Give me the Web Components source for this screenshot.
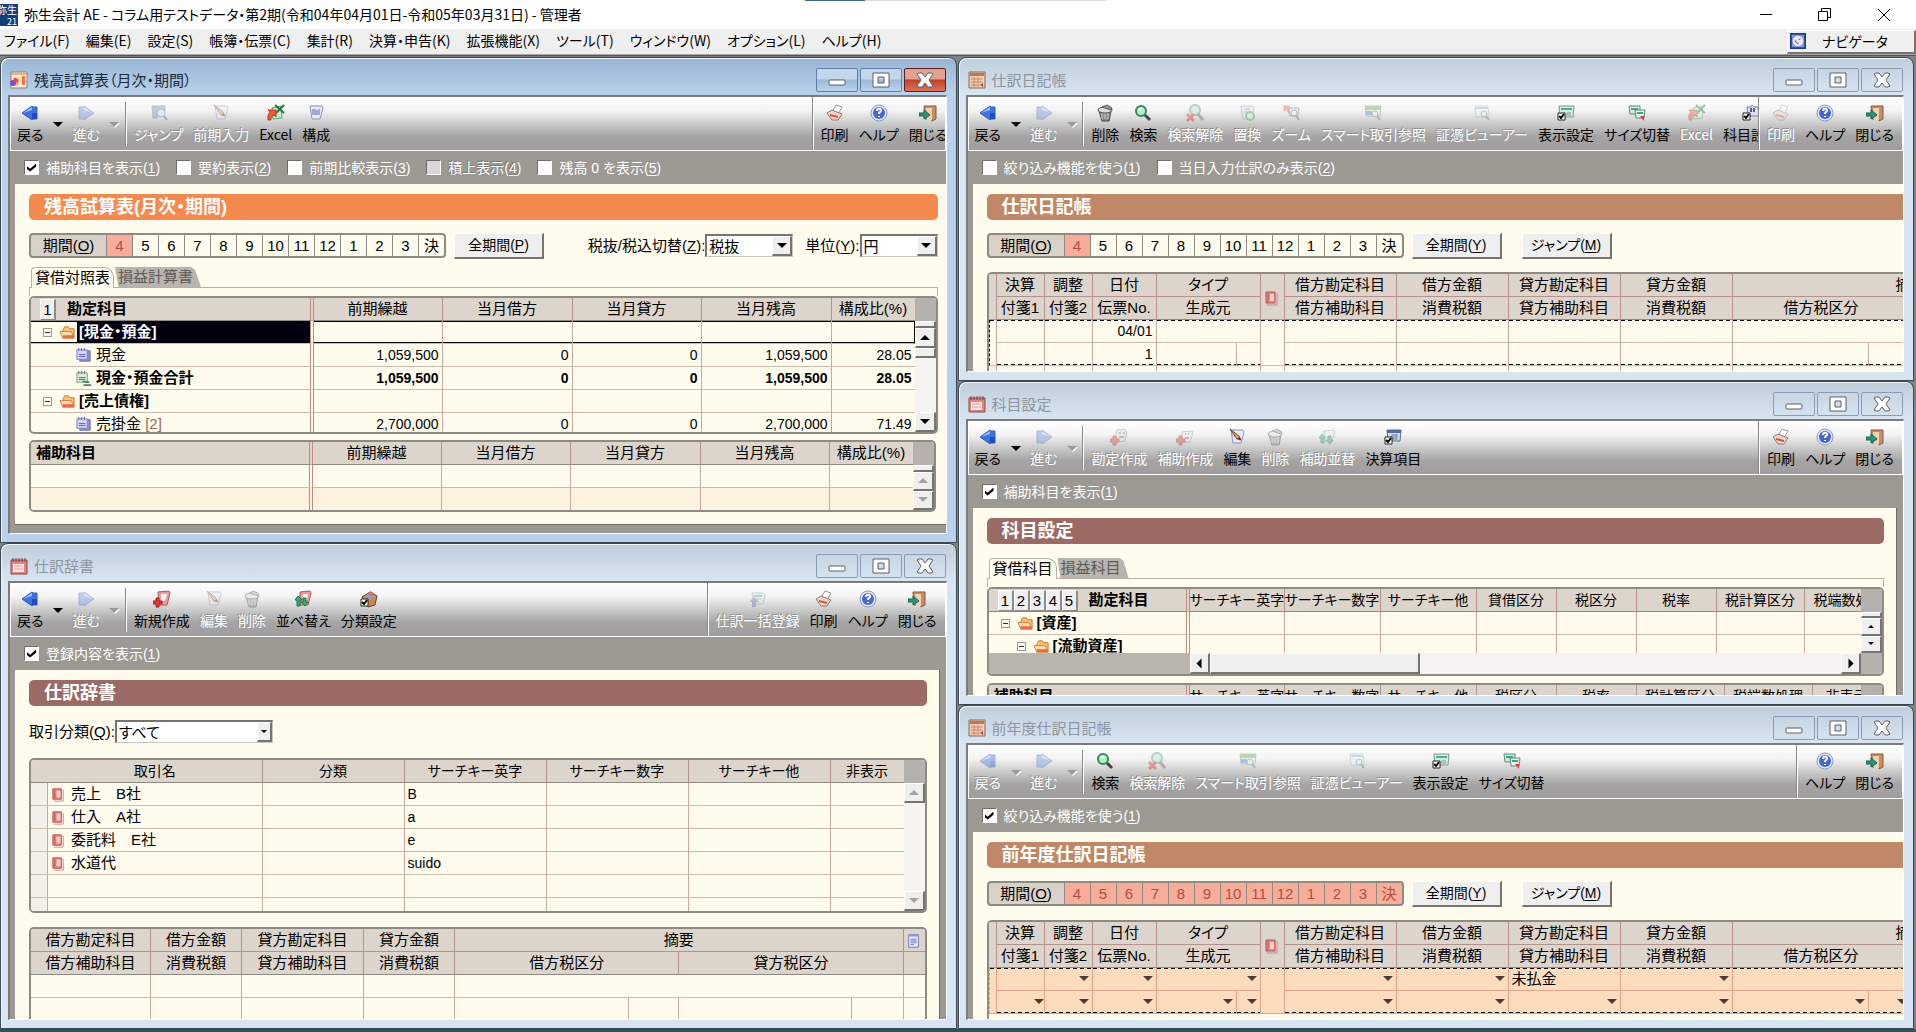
<!DOCTYPE html>
<html lang="ja">
<head>
<meta charset="utf-8">
<title>弥生会計 AE</title>
<style>
    html, body {
        margin: 0;
        height: 100%;
        overflow: hidden;
    }
    body {
        font: 15px/22px "Liberation Sans", "Noto Sans CJK JP", sans-serif;
        font-feature-settings: "palt";
        color: #000;
        background: #2c5357;
    }
</style>
</head>
<body>
<accounting-app></accounting-app>

<script>
const BASE = `
    :host, * { box-sizing: border-box; }
    button, input, select { font: inherit; font-feature-settings: inherit; color: inherit; margin: 0; padding: 0; border: 0; border-radius: 0; background: none; }
    u { text-underline-offset: 2px; }
`;

// "期間(_O)" -> underlined access key
const accel = text => text.replace(/_(.)/g, '<u>$1</u>');

const NOTE = '<path d="M3 3h11l2 2-2 9H5z" fill="#d5e9df" stroke="#7c9c92"/><path d="M5 5h8v2H5z" fill="#4fae8f"/>';
const LENS = '<circle cx="11" cy="10" r="3" fill="#dff0f4" stroke="#6d8d9d"/><path d="M13 12l3 4" stroke="#777" stroke-width="2"/>';
const CARD = '<path d="M3 2h12l1 2-3 11H5z" fill="#e8e9f6" stroke="#8d93b8"/>';
const PLUS = '<path d="M3 8h3v3h3v3H6v3H3v-3H0v-3h3z" fill="#e23a35" stroke="#a22"/>';
const CHECK = '<path d="M1 9h7v7H1z" fill="#fff" stroke="#222"/><path d="M2 12l2 2 3-4" stroke="#000" stroke-width="2" fill="none"/>';
const PENCIL = '<path d="M2 1l9 7 2 4-4-1z" fill="#e7a04c" stroke="#7a4a2a"/><path d="M11 9l2 3-3-1z" fill="#333"/>';
const XCEL = '<path d="M5 4l9-2 1 12-9 1z" fill="#c8ead0" stroke="#55a070"/><path d="M8 1l9 8M17 1l-8 8" stroke="#1c7a3d" stroke-width="2"/><path d="M1 16v-5l2-3-2-2h8v7l-2-2-3 2v3z" fill="#ee5a33" stroke="#b93a1d"/>';

const ICONS = {
    back: '<path d="M1 9l10-7 1 1h4v12h-4l-1 1z" fill="#3d73e0" stroke="#3560b5"/><path d="M2 9l9-6v3z" fill="#9dbdf7"/><path d="M11 9h5v6h-5z" fill="#1f4cc0"/>',
    forward: '<path d="M17 9L7 2v1H2v12h5v1z" fill="#6d92e4" stroke="#4b69b8"/><path d="M16 9L7 3v3z" fill="#b5cbf8"/>',
    jump: '<path d="M2 2h5v12H3zM8 2h7v5H8z" fill="#6c94bd" stroke="#5a7899"/><circle cx="11" cy="9" r="4" fill="#cfe5f1" stroke="#4778a8"/><path d="M14 12l3 4" stroke="#567" stroke-width="2"/>',
    edit: CARD + PENCIL,
    excel: XCEL,
    compose: CARD + '<path d="M6 5v6M8 5v6M10 6v5M12 5v6" stroke="#6268b4"/>',
    print: '<path d="M6 8l4-7 6 2-4 7z" fill="#fff" stroke="#999"/><path d="M1 9l5-3 10 4-4 6H6z" fill="#ecd6c9" stroke="#95766c"/><path d="M4 10l8 2v2l-8-2z" fill="#e04c3a"/>',
    help: '<circle cx="9" cy="9" r="8" fill="#dfe7f7" stroke="#8a9cc4"/><circle cx="9" cy="9" r="6" fill="#4868cf"/><path d="M7 7c0-3 5-3 4 0-1 1-2 1-2 3M9 12v1" stroke="#fff" stroke-width="2" fill="none"/>',
    door: '<path d="M5 2h12v13l-4 2v-2H6z" fill="#c88d66" stroke="#8c5b3d"/><path d="M7 4h6v12H8z" fill="#efd1ae"/><path d="M0 9h5V6l6 5-6 4v-3H0z" fill="#27967e" stroke="#176553"/>',
    trash: '<path d="M3 7h12l-2 10H6z" fill="#8d8d8d" stroke="#444"/><path d="M6 9v6M9 9v6M12 9v6" stroke="#ccc"/><ellipse cx="9" cy="6" rx="7" ry="3" fill="#ddd" stroke="#555"/><path d="M6 3l5-2 5 3-1 2z" fill="#999" stroke="#555"/>',
    search: '<circle cx="7" cy="7" r="5" fill="#b9eccb" stroke="#2f8a59" stroke-width="2"/><path d="M5 6l3-2" stroke="#fff" stroke-width="2"/><path d="M11 11l5 5" stroke="#444" stroke-width="3"/>',
    unsearch: '<circle cx="9" cy="6" r="5" fill="#b9eccb" stroke="#5a9a79" stroke-width="2"/><path d="M12 10l5 6" stroke="#666" stroke-width="3"/><path d="M1 10l7 7M8 10l-7 7" stroke="#e22" stroke-width="3"/>',
    replace: CARD + '<circle cx="12" cy="12" r="4" fill="#c9efd2" stroke="#35a565" stroke-width="2"/><path d="M6 5h6M6 8h4" stroke="#6b77b5"/>',
    zoom: '<path d="M1 1l7 1-1 3 3 3-3 2-3-4-2 2z" fill="#e25b3a"/><path d="M7 4h10l-1 8H8z" fill="#dbe7ee" stroke="#667"/><circle cx="12" cy="9" r="3" fill="#eef7fb" stroke="#667"/><path d="M14 11l3 5" stroke="#666" stroke-width="2"/>',
    smart: '<path d="M1 2h16l-1 10H2z" fill="#e6efe0" stroke="#7c9c72"/><path d="M1 2h16v4H1z" fill="#64ab4a"/><path d="M2 7h6v4H2z" fill="#4b89cf"/>' + LENS,
    voucher: '<path d="M2 2h13l1 11H3z" fill="#eef5f8" stroke="#9ab2bb"/><path d="M3 4h12" stroke="#7fb0c0" stroke-width="2"/>' + LENS,
    viewset: '<path d="M2 2h15l-1 11H3z" fill="#d5e9df" stroke="#7c9c92"/><path d="M4 4h11v2H4z" fill="#4fae8f"/><path d="M9 9h5M9 11h5" stroke="#7c9c92"/>' + CHECK,
    resize: '<path d="M1 2h11v8H2z" fill="#d5e9df" stroke="#55907c"/><path d="M3 4h7v2H3z" fill="#3fa583"/><path d="M7 6h10l-1 8H8z" fill="#e3f1ea" stroke="#55907c"/><path d="M9 8h6v2H9z" fill="#3fa583"/><path d="M12 12h4v5z" fill="#e2353a"/>',
    account: '<path d="M5 3h4l1-2 2 2h4l1 9H6z" fill="#dcdff5" stroke="#777ba5"/><path d="M9 4v4M12 4v4" stroke="#555a99" stroke-width="2"/>' + CHECK,
    acctnew: '<path d="M6 3l3-2 2 1 3-1 3 3-2 9-8 1z" fill="#e0dfe3" stroke="#88888f"/><path d="M9 5h2M13 5h2M9 9h5" stroke="#777" stroke-width="2"/>' + PLUS,
    subnew: '<path d="M6 4l10-1 1 2-3 9H6z" fill="#eeece9" stroke="#99938d"/><path d="M9 6h1M12 6h1M9 10h4" stroke="#777" stroke-width="2"/>' + PLUS,
    subsort: '<path d="M6 3l10-1 1 2-3 9H6z" fill="#e0eee6" stroke="#8aa398"/><path d="M4 6l4 4H6v5H3v-5H1zM12 16l-4-4h2V8h3v4h2z" fill="#30a871" stroke="#1c7f52"/>',
    closing: '<path d="M3 2h14l-1 11H4z" fill="#d3dcea" stroke="#5f718f"/><path d="M3 2h14v3H3z" fill="#506ca8"/><path d="M7 7h7M7 9h7M7 11h7M9 6v6M12 6v6" stroke="#7b8cae"/>' + CHECK,
    create: '<path d="M5 2l11-1 1 2-3 12H6z" fill="#ef9aa0" stroke="#b3565c"/><path d="M8 4h6l-2 7H8z" fill="#fff2f0"/>' + PLUS,
    sort: '<path d="M6 2l10-1 1 2-3 12H6z" fill="#ef9aa0" stroke="#b3565c"/><path d="M9 4h5l-1 6H9z" fill="#fff2f0"/><path d="M4 6l4 4H6v6H3v-6H1zM11 16l-4-4h2V8h3v4h2z" fill="#2fb573" stroke="#14794a"/>',
    category: '<path d="M2 7l8-5 7 4-2 9-7 2z" fill="#c98a58" stroke="#6e3f20"/><path d="M5 6l5-4 5 4-5 3z" fill="#8f9ae0"/><path d="M10 1l4 2-1 3-4-1z" fill="#e46a5a"/>' + CHECK,
    bulk: NOTE + '<path d="M6 9h6" stroke="#7c9c92"/><path d="M5 7l5 5H7v5H3v-5H0z" fill="#7a63d0"/>',
    folder: '<path d="M4 7l2-4h4l1 2h5v9H4z" fill="#f9c177" stroke="#c9762c"/><path d="M1 8h12l3 7H4z" fill="#fbdcae" stroke="#d0803a"/><path d="M4 12h11l1 3H4z" fill="#e86a3e"/>',
    item: '<path d="M5 4h11v11H5z" fill="#8e90da" stroke="#6467b0"/><path d="M2 3h11v10H2z" fill="#d3d6f8" stroke="#7b80c8"/><path d="M4 1v3M7 1v3M10 1v3M4 8h7M4 10h7" stroke="#5b60b8"/>',
    total: '<path d="M2 3h11v10H2z" fill="#dbeae0" stroke="#7c9c86"/><path d="M4 1v3M7 1v3M10 1v3M4 8h7M4 10h7" stroke="#4c7a5b"/><path d="M8 11l7 1v2l-7-1zM9 15h8v2H9z" fill="#4f8465"/>',
    book: '<path d="M3 3h9v11H3z" fill="#e88b86" stroke="#b45450"/><path d="M5 4v9" stroke="#b45450"/><path d="M7 5h4v7H7z" fill="#f9cfcb"/><path d="M14 4v12H4" stroke="#c98d88" fill="none"/>',
    memo: '<path d="M3 2h11v14H3z" fill="#e8ebfb" stroke="#6a70b5"/><path d="M4 1h9v3H4z" fill="#8c93d6"/><path d="M5 7h7M5 9h7M5 11h7M5 13h4" stroke="#6a70b5"/>',
    chart: '<path d="M1 1h16v16H1z" fill="#fbeee0" stroke="#8b7b78"/><path d="M2 2h14v2H2z" fill="#f0b27a"/><path d="M12 5h3v9h-3z" fill="#ee7b3d"/><path d="M3 7c6-2 8 2 5 7l-5 1z" fill="#f4a070"/><circle cx="3" cy="12" r="3" fill="#7a4fd0"/><path d="M4 11V7a4 4 0 0 1 4 4z" fill="#e8483f"/>',
    ledger: '<path d="M1 1h16v16H1z" fill="#f1c9ae" stroke="#8b6a5c"/><path d="M2 2h14v3H2z" fill="#b07a66"/><path d="M3 8h11M3 11h11M3 14h8M6 6v10M10 6v10" stroke="#c98b70"/><path d="M12 14l3-2v4z" fill="#9c4a3a"/>',
    calendar: '<path d="M1 3h16v14H1z" fill="#dd8688" stroke="#8c4a4e"/><path d="M3 1v4M6 1v4M9 1v4M12 1v4M15 1v4" stroke="#7a4448"/><path d="M3 7h11v8H3z" fill="#fde8e6"/><path d="M4 9h9M4 12h9" stroke="#e0a09e"/>',
    navi: '<path d="M1 1h16v16H1z" fill="#8496da" stroke="#243a86" stroke-width="2"/><circle cx="9" cy="9" r="6" fill="#e6ebfb"/><path d="M5 9l7-3-3 7z" fill="#8b4a9c"/><circle cx="9" cy="9" r="2" fill="#fff"/>'
};

class WinIcon extends HTMLElement {
    constructor() {
        super();
        this.attachShadow({mode: 'open'});
    }

    connectedCallback() {
        this.shadowRoot.innerHTML = `
            <style>
                :host { display: inline-block; flex: none; width: var(--icon, 18px); height: var(--icon, 18px); }
                svg { display: block; width: 100%; height: 100%; }
            </style>
            <svg viewBox="0 0 18 18" fill="none" aria-hidden="true">${ICONS[this.getAttribute('name')] || ''}</svg>`;
    }
}
customElements.define('win-icon', WinIcon);

class ToolButton extends HTMLElement {
    constructor() {
        super();
        this.attachShadow({mode: 'open'});
    }

    connectedCallback() {
        const off = this.hasAttribute('disabled');
        const menu = this.hasAttribute('menu');
        this.shadowRoot.innerHTML = `
            <style>
                ${BASE}
                :host { display: flex; flex: none; }
                button { display: flex; flex-direction: column; align-items: center; padding: 7px 5px 0; white-space: nowrap; }
                button.arrow { padding: 25px 0 0; width: 19px; }
                span { line-height: 24px; }
                .arrow i { border: 5px solid transparent; border-top-color: #000; border-bottom: 0; }
                button:disabled win-icon { opacity: .4; }
                button:disabled span { color: #fff; text-shadow: -1px -1px 0 #939191; }
                button:disabled i { border-top-color: #999; filter: drop-shadow(1px 1px 0 #fff); }
            </style>
            <button ${off ? 'disabled' : ''}><win-icon name="${this.getAttribute('icon')}"></win-icon><span>${this.getAttribute('label')}</span></button>
            ${menu ? `<button class="arrow" aria-label="履歴" ${off ? 'disabled' : ''}><i></i></button>` : ''}`;
    }
}
customElements.define('tool-button', ToolButton);

class ToolBar extends HTMLElement {
    constructor() {
        super();
        this.attachShadow({mode: 'open'}).innerHTML = `
            <style>
                ${BASE}
                :host {
                    display: flex;
                    flex: none;
                    height: 54px;
                    border: 1px solid #fff;
                    border-top: 0;
                    background: linear-gradient(#fff 0%, #f4f4f4 25%, #a5a3a3 75%, #9f9d9d 100%);
                    font-family: "Noto Sans CJK JP", sans-serif;
                    font-size: 14px;
                    overflow: hidden;
                }
                .history { display: flex; flex: none; margin: 5px 0 4px; padding: 0 1px; border-right: 1px solid #888; box-shadow: 1px 0 #fff; }
                .history slot { display: flex; margin-top: -5px; }
                .main { display: flex; flex: 1; min-width: 0; overflow: hidden; padding-left: 3px; }
                .side { display: flex; flex: none; border-left: 1px solid #888; box-shadow: inset 1px 0 #fff; padding: 0 3px; }
                :host([cut]) .side { margin-right: -11px; }
            </style>
            <div class="history"><slot name="history"></slot></div>
            <div class="main"><slot></slot></div>
            <div class="side"><slot name="side"></slot></div>`;
    }
}
customElements.define('tool-bar', ToolBar);

class CheckOption extends HTMLElement {
    constructor() {
        super();
        this.attachShadow({mode: 'open'});
    }

    connectedCallback() {
        const has = name => this.hasAttribute(name) ? name : '';
        this.shadowRoot.innerHTML = `
            <style>
                ${BASE}
                :host { display: block; color: #fff; font-size: 14px; }
                label { display: flex; align-items: center; gap: 7px; white-space: nowrap; }
                input { appearance: none; width: 15px; height: 15px; background: #fff; border: 1px solid #6f6c68; border-right-color: #fff; border-bottom-color: #fff; display: grid; place-content: center; }
                input:checked::before { content: ""; width: 9px; height: 8px; background: #000; clip-path: polygon(0 35%, 35% 65%, 100% 0, 100% 40%, 35% 100%, 0 70%); }
                input:disabled { background: #d9d7d4; }
                input:disabled + span { text-shadow: -1px -1px 0 #7d7a76; }
            </style>
            <label><input type="checkbox" ${has('checked')} ${has('disabled')}><span>${accel(this.getAttribute('label'))}</span></label>`;
    }
}
customElements.define('check-option', CheckOption);

class PushButton extends HTMLElement {
    constructor() {
        super();
        this.attachShadow({mode: 'open'});
    }

    connectedCallback() {
        this.shadowRoot.innerHTML = `
            <style>
                ${BASE}
                :host { display: block; flex: none; }
                button { width: 90px; height: 26px; background: #efefef; border: 1px solid #fff; border-right: 2px solid #77746f; border-bottom: 2px solid #77746f; font-size: 14px; line-height: 22px; white-space: nowrap; }
            </style>
            <button>${accel(this.getAttribute('label'))}</button>`;
    }
}
customElements.define('push-button', PushButton);

class SelectField extends HTMLElement {
    constructor() {
        super();
        this.attachShadow({mode: 'open'});
    }

    connectedCallback() {
        this.shadowRoot.innerHTML = `
            <style>
                ${BASE}
                :host { display: flex; align-items: center; flex: none; }
                .box { position: relative; width: var(--field, 88px); height: 23px; background: #fff; border: 2px solid #77746f; border-right: 1px solid #c9c6c0; border-bottom: 1px solid #c9c6c0; }
                select { appearance: none; width: 100%; height: 100%; padding-left: 2px; line-height: 20px; }
                i { position: absolute; right: 0; top: 0; bottom: 0; width: var(--arrow, 20px); background: #efefef; border: 1px solid #fff; border-right: 2px solid #77746f; border-bottom: 2px solid #77746f; display: grid; place-content: center; pointer-events: none; }
                i::before { content: ""; border: var(--tip, 5px) solid transparent; border-top-color: #000; border-bottom: 0; }
                label { white-space: nowrap; }
            </style>
            <label for="s">${accel(this.getAttribute('label'))}</label>
            <div class="box"><select id="s"><option>${this.getAttribute('value')}</option></select><i></i></div>`;
    }
}
customElements.define('select-field', SelectField);

class PeriodBar extends HTMLElement {
    constructor() {
        super();
        this.attachShadow({mode: 'open'});
    }

    connectedCallback() {
        const all = this.hasAttribute('all');
        const months = ['4', '5', '6', '7', '8', '9', '10', '11', '12', '1', '2', '3', '決'];
        this.shadowRoot.innerHTML = `
            <style>
                ${BASE}
                :host { display: flex; flex: none; height: 25px; border: 2px solid #8e8b84; border-radius: 4px; background: #8e8b84; gap: 1px; overflow: hidden; line-height: 21px; }
                span { width: 75px; background: #d9d1c8; text-align: center; }
                button { width: 25px; background: #fffcee; }
                .on { background: #f8ad9b; color: #b0503c; }
            </style>
            <span>${accel('期間(_O)')}</span>
            ${months.map((m, i) => `<button class="${all || i === 0 ? 'on' : ''}">${m}</button>`).join('')}`;
    }
}
customElements.define('period-bar', PeriodBar);

class TabStrip extends HTMLElement {
    constructor() {
        super();
        this.attachShadow({mode: 'open'});
    }

    connectedCallback() {
        const [first, second] = this.getAttribute('tabs').split(',');
        this.shadowRoot.innerHTML = `
            <style>
                ${BASE}
                :host { display: block; flex: none; }
                .tabs { display: flex; align-items: flex-end; height: 21px; padding-left: 2px; gap: 1px; border-bottom: 1px solid #b9b1a6; }
                button { height: 20px; line-height: 20px; padding: 0 3px; white-space: nowrap; }
                button:first-child { height: 21px; margin-bottom: -1px; border: 1px solid #b9b1a6; border-bottom: 0; border-radius: 4px 10px 0 0; background: #fffcee; }
                button + button { background: #b8b4ae; color: #5d5a56; padding-right: 8px; clip-path: polygon(0 0, 88% 0, 93% 15%, 100% 100%, 4% 100%); }
                .edge { height: 8px; border: solid #b9b1a6; border-width: 0 1px; }
            </style>
            <div class="tabs" role="tablist"><button role="tab" aria-selected="true">${first}</button><button role="tab">${second}</button></div>
            <div class="edge"></div>`;
    }
}
customElements.define('tab-strip', TabStrip);

class ScrollBar extends HTMLElement {
    constructor() {
        super();
        this.attachShadow({mode: 'open'});
    }

    connectedCallback() {
        const off = this.hasAttribute('disabled') ? 'disabled' : '';
        this.shadowRoot.innerHTML = `
            <style>
                ${BASE}
                :host { display: flex; flex-direction: column; flex: none; width: 21px; background: #f5f4f3; }
                :host([horizontal]) { flex-direction: row; width: auto; height: 21px; }
                .corner { flex: none; height: 23px; background: #b5b1ac; }
                .split { height: 7px; }
                .split, button, .thumb { flex: 0 1 auto; background: #efefef; border: 1px solid #fff; border-right: 2px solid #77746f; border-bottom: 2px solid #77746f; }
                button { flex: 0 1 20px; min-height: 15px; width: 21px; display: grid; place-content: center; }
                .track { flex: 1 1 0; }
                .thumb { height: 10px; }
                i { border: 5px solid transparent; border-bottom-color: #000; border-top: 0; }
                .end i { transform: rotate(180deg); }
                button:disabled i { border-bottom-color: #a5a29e; }
                :host([short]) i { border-width: 0 3px 3px; }
                :host([unsplit]) .split { display: none; }
                :host([horizontal]) .corner, :host([horizontal]) .split { display: none; }
                :host([horizontal]) .thumb { height: auto; width: 210px; }
                :host([horizontal]) .start i { transform: rotate(-90deg); }
                :host([horizontal]) .end i { transform: rotate(90deg); }
            </style>
            <div class="corner"></div>
            <div class="split"></div>
            <button class="start" aria-label="前へ" ${off}><i></i></button>
            ${off || this.hasAttribute('short') ? '' : '<div class="thumb"></div>'}
            <div class="track"></div>
            <button class="end" aria-label="次へ" ${off}><i></i></button>`;
    }
}
customElements.define('scroll-bar', ScrollBar);

const th = (t, o = {}) => ({t, ...o});
const mark = '<win-icon name="book"></win-icon>';
const group = (t, level = 0) => `<div class="tree g l${level}"><span class="pre"><b class="minus"></b><win-icon name="folder"></win-icon></span><span class="txt">[${t}]</span></div>`;
const leaf = (t, icon = 'item') => `<div class="tree leaf"><win-icon name="${icon}"></win-icon><span>${t}</span></div>`;
const levels = n => Array.from({length: n}, (_, i) => `<button class="lv">${i + 1}</button>`).join('');
const sums = ['前期繰越', '当月借方', '当月貸方', '当月残高', '構成比(%)'];
const journalHead = [
    [th('', {rs: 2}), th('決算'), th('調整'), th('日付'), th('タイプ', {cs: 2}), th(mark, {rs: 2}), th('借方勘定科目'), th('借方金額'), th('貸方勘定科目'), th('貸方金額'), th('摘要', {cs: 4})],
    [th('付箋1'), th('付箋2'), th('伝票No.'), th('生成元', {cs: 2}), th('借方補助科目'), th('消費税額'), th('貸方補助科目'), th('消費税額'), th('借方税区分', {cs: 2}), th('貸方税区分', {cs: 2})]
];
const journalCols = [8, 48, 48, 64, 80, 24, 24, 112, 112, 112, 112, 136, 42, 136, 42];
const dd = '<i class="dd"></i>';

const GRIDS = {
    balance: {
        cols: [null, 129, 130, 129, 130, 83],
        double: true,
        head: [[th(levels(1) + '勘定科目', {c: 'name'}), ...sums.map(s => th(s))]],
        rows: [
            {c: 'sel', d: [group('現金・預金'), '', '', '', '', '']},
            {d: [leaf('現金'), '1,059,500', '0', '0', '1,059,500', '28.05']},
            {c: 'bold', d: [leaf('現金・預金合計', 'total'), '1,059,500', '0', '0', '1,059,500', '28.05']},
            {d: [group('売上債権'), '', '', '', '', '']},
            {d: [leaf('売掛金 <em>[2]</em>'), '2,700,000', '0', '0', '2,700,000', '71.49']}
        ],
        scroll: '<scroll-bar></scroll-bar>'
    },
    balanceSub: {
        cols: [null, 129, 129, 130, 129, 83],
        double: true,
        head: [[th('補助科目', {c: 'name flush'}), ...sums.map(s => th(s))]],
        rows: [{d: ['', '', '', '', '', '']}, {c: 'alt', d: ['', '', '', '', '', '']}],
        scroll: '<scroll-bar disabled></scroll-bar>'
    },
    journal: {
        cols: journalCols,
        head: journalHead,
        rows: [
            {c: 'top', d: [th('', {rs: 2, c: 'grip'}), '', '', '04/01', th('', {cs: 2}), th('', {rs: 2}), '', '', '', '', th('', {cs: 4})]},
            {c: 'bottom', d: ['', '', '1', '', '', '', '', '', '', '', '', '', '']},
            {d: [th('', {c: 'grip'}), '', '', '', th('', {cs: 2}), '', '', '', '', '', th('', {cs: 4})]}
        ]
    },
    prevJournal: {
        cols: journalCols,
        head: journalHead,
        rows: [
            {c: 'top', d: [th('', {rs: 2, c: 'grip'}), '', dd, dd, th(dd, {cs: 2}), th('', {rs: 2}), dd, dd, th('未払金', {c: 'left'}), dd, th('', {cs: 4})]},
            {c: 'bottom', d: [dd, dd, dd, dd, dd, dd, dd, dd, dd, dd, dd, dd, dd]}
        ]
    },
    accounts: {
        cols: [201, 95, 96, 96, 80, 80, 80, 88, 88],
        double: true,
        head: [[th(levels(5) + '勘定科目', {c: 'name'}), ...['サーチキー英字', 'サーチキー数字', 'サーチキー他', '貸借区分', '税区分', '税率', '税計算区分', '税端数処理'].map(s => th(s, {c: 'small'}))]],
        rows: [
            {d: [group('資産'), '', '', '', '', '', '', '', '']},
            {d: [group('流動資産', 1), '', '', '', '', '', '', '', '']}
        ],
        scroll: '<scroll-bar short></scroll-bar>',
        footer: '<div class="foot"><div class="pad"></div><scroll-bar horizontal></scroll-bar><div class="cap"></div></div>'
    },
    accountsSub: {
        cols: [201, 95, 96, 96, 80, 80, 88, 88, 68],
        double: true,
        head: [[th('補助科目', {c: 'name flush'}), ...['サーチキー英字', 'サーチキー数字', 'サーチキー他', '税区分', '税率', '税計算区分', '税端数処理', '非表示'].map(s => th(s, {c: 'small'}))]],
        rows: [],
        scroll: '<scroll-bar short></scroll-bar>'
    },
    dictionary: {
        cols: [17, null, 142, 142, 142, 142, 73],
        head: [[th('', {c: 'open'}), ...['取引名', '分類', 'サーチキー英字', 'サーチキー数字', 'サーチキー他', '非表示'].map(s => th(s, {c: 'small'}))]],
        rows: [['売上　B社', 'B'], ['仕入　A社', 'a'], ['委託料　E社', 'e'], ['水道代', 'suido'], null, null].map(r => ({
            c: 'text',
            d: [th('', {c: 'grip'}), r ? `<div class="tree entry">${mark}<span>${r[0]}</span></div>` : '', '', r ? r[1] : '', '', '', '']
        })),
        scroll: '<scroll-bar disabled unsplit></scroll-bar>'
    },
    dictionaryDetail: {
        cols: [120, 91, 122, 91, null, 50, 173, 51, 21],
        head: [
            [th('借方勘定科目'), th('借方金額'), th('貸方勘定科目'), th('貸方金額'), th('摘要', {cs: 4}), th('<win-icon name="memo"></win-icon>', {c: 'tight'})],
            [th('借方補助科目'), th('消費税額'), th('貸方補助科目'), th('消費税額'), th('借方税区分', {cs: 2}), th('貸方税区分', {cs: 2}), th('')]
        ],
        rows: [
            {d: ['', '', '', '', th('', {cs: 4}), '']},
            {d: ['', '', '', '', '', '', '', '', '']}
        ]
    }
};

class DataGrid extends HTMLElement {
    constructor() {
        super();
        this.attachShadow({mode: 'open'});
    }

    connectedCallback() {
        const g = GRIDS[this.getAttribute('model')];
        const flexible = g.cols.includes(null);
        const width = flexible ? '100%' : g.cols.reduce((a, b) => a + b, 0) + 'px';
        const head = g.head.map(r => `<tr>${r.map(c => this.cell('th', c)).join('')}</tr>`).join('');
        const rows = g.rows.map(r => `<tr class="${r.c || ''}">${r.d.map(c => this.cell('td', c)).join('')}</tr>`).join('');
        this.shadowRoot.innerHTML = `
            <style>
                ${BASE}
                ${this.styles()}
                table { width: ${width}; }
                ${g.double ? 'th:first-child, td:first-child { border-right: 4px double #c28a80; }' : ''}
            </style>
            <div class="main">
                <div class="view">
                    <table><colgroup>${g.cols.map(w => `<col${w ? ` style="width:${w}px"` : ''}>`).join('')}</colgroup><thead>${head}</thead><tbody>${rows}</tbody></table>
                </div>
                ${g.scroll || ''}
            </div>
            ${g.footer || ''}`;
    }

    cell(tag, c) {
        const o = typeof c === 'string' ? {t: c} : c;
        return `<${tag}${o.c ? ` class="${o.c}"` : ''}${o.cs ? ` colspan="${o.cs}"` : ''}${o.rs ? ` rowspan="${o.rs}"` : ''}>${o.t}</${tag}>`;
    }

    styles() {
        return `
            :host { display: flex; flex-direction: column; min-height: 0; border: 2px solid #8e8b84; border-radius: 5px; background: #fffcee; overflow: hidden; }
            :host([open]) { border-right: 0; border-bottom: 0; border-radius: 5px 0 0 0; }
            .main { display: flex; flex: 1; min-height: 0; }
            .view { flex: 1; min-width: 0; overflow: hidden; }
            table { table-layout: fixed; border-collapse: separate; border-spacing: 0; }
            th, td { height: 23px; padding: 0; line-height: 22px; border-right: 1px solid #c9a79e; border-bottom: 1px solid #cdbcae; white-space: nowrap; overflow: hidden; }
            th { font-weight: normal; background: #ddd5cc; border-color: #b3938b; text-align: center; }
            thead tr:last-child th { border-bottom-color: #8e8b84; }
            td { text-align: right; padding-right: 3px; font-size: 14px; }
            td:first-child { padding: 0; }
            th:last-child, td:last-child { border-right: 0; }
            th win-icon { vertical-align: middle; }
            th.small { font-size: 14px; }
            th.open { border-right: 0; }
            .tight win-icon { --icon: 16px; }
            th.name { text-align: left; font-weight: bold; padding-left: 9px; }
            th.flush { padding-left: 5px; }
            .lv { width: 16px; height: 21px; margin-top: 1px; background: #efefef; border: 1px solid #fff; border-right: 2px solid #8e8b84; border-bottom: 1px solid #8e8b84; font-weight: normal; line-height: 18px; vertical-align: top; }
            .lv:last-of-type { margin-right: 11px; }
            .tree { display: flex; align-items: center; height: 22px; font-size: 15px; text-align: left; --icon: 17px; }
            .g { font-weight: bold; }
            .pre { display: flex; align-items: center; align-self: stretch; gap: 7px; padding: 0 1px 0 12px; }
            .l1 .pre { padding-left: 28px; }
            .minus { width: 9px; height: 9px; border: 1px solid #999; background: linear-gradient(#333, #333) center / 5px 1px no-repeat; }
            .txt { flex: 1; padding-left: 2px; }
            .leaf { padding-left: 44px; gap: 4px; }
            .entry { padding-left: 2px; gap: 4px; }
            em { font-style: normal; color: #a5645a; }
            .bold { font-weight: bold; }
            .alt td { background: #fdf2e0; }
            .sel td { box-shadow: inset 0 1px #000, inset 0 -1px #000; }
            .sel .pre { margin: 1px 0; }
            .sel .txt { background: #000010; color: #fff; }
            .sel td:last-child { border-right: 1px solid #000; }
            .text td { text-align: left; padding-left: 3px; }
            .text td:first-child, .text td:nth-child(2) { padding-left: 0; }
            td.grip { background: #f3efe9; }
            td.left { text-align: left; padding-left: 3px; font-size: 15px; }
            .top td { background: repeating-linear-gradient(90deg, #000 0 4px, transparent 4px 7px) top / 100% 1px no-repeat; }
            .bottom td { background: repeating-linear-gradient(90deg, #000 0 4px, transparent 4px 7px) bottom / 100% 1px no-repeat; }
            td.grip[rowspan] { border-left: 1px dashed #000; }
            :host([tint]) td { background-color: #fddcbd; border-color: #e0a58c; }
            .dd { display: inline-block; border: 5px solid transparent; border-top-color: #4a3a30; border-bottom: 0; margin-bottom: 3px; }
            .foot { display: flex; flex: none; height: 21px; }
            .pad { flex: none; width: 201px; background: #b8b4ae; }
            .foot scroll-bar { flex: 1; }
            .cap { width: 21px; background: #b5b1ac; }
        `;
    }
}
customElements.define('data-grid', DataGrid);

class MdiWindow extends HTMLElement {
    constructor() {
        super();
        this.attachShadow({mode: 'open'});
    }

    connectedCallback() {
        const title = this.getAttribute('heading');
        this.shadowRoot.innerHTML = `
            <style>
                ${BASE}
                :host {
                    --frame: #d7e4f2;
                    --shade: #c0cdda;
                    --caption: #8d959e;
                    display: flex;
                    flex-direction: column;
                    min-height: 0;
                    min-width: 0;
                    padding: 0 9px 8px 7px;
                    border: 1px solid #3c464f;
                    border-radius: 8px 8px 0 0;
                    box-shadow: inset 1px 1px #f2f7fc;
                    background: linear-gradient(var(--shade), var(--frame) 36px, var(--frame));
                }
                :host([active]) { --frame: #b9d1ea; --shade: #99b4d5; --caption: #1b2a3c; }
                header { display: flex; flex: none; align-items: center; height: 37px; padding: 6px 1px 0 2px; color: var(--caption); font-family: "Noto Sans CJK JP", sans-serif; }
                h2 { flex: 1; margin: 0 0 0 6px; font-size: 15px; font-weight: normal; }
                .controls { display: flex; gap: 2px; }
                .controls button { width: 42px; height: 24px; border: 1px solid #8a9bb5; border-radius: 2px; display: grid; place-content: center; }
                :host([active]) .controls button { border-color: #5f7fa8; background: linear-gradient(#c4d6ea 45%, #9db9d9 50%, #b9d2ea); }
                :host([active]) .controls .x { border-color: #5b1f1c; background: linear-gradient(#e2a193 45%, #c1402a 50%, #d8755a); }
                .body { display: flex; flex-direction: column; flex: 1; min-height: 0; border: 2px solid #7d7b79; border-right: 1px solid #fff; border-bottom: 1px solid #fff; background: #9c9892; }
                .options { display: flex; flex: none; align-items: center; gap: 16px; height: 33px; padding-left: 14px; }
                .page { display: flex; flex-direction: column; flex: 1; min-height: 0; margin-left: 5px; padding: 10px 8px 0 14px; background: #fffcee; overflow: hidden; }
                :host([inset-bottom]) .page { margin-bottom: 8px; padding-bottom: 12px; border-bottom: 1px solid #6f6c68; }
                :host([inset-right]) .page { margin-right: 6px; padding-right: 12px; border-right: 1px solid #6f6c68; }
                :host([overflow]) .page { padding-right: 0; }
                h3 { flex: none; height: 26px; margin: 0 0 13px; padding-left: 15px; border-radius: 5px; background: var(--banner, #9c6a64); color: #fff; font-size: 18px; line-height: 26px; font-weight: bold; }
                :host([overflow]) h3 { border-radius: 5px 0 0 5px; }
            </style>
            <header>
                <win-icon name="${this.getAttribute('icon')}"></win-icon>
                <h2>${title}</h2>
                <div class="controls">
                    <button aria-label="最小化"><svg width="18" height="16"><rect x="1" y="8" width="16" height="5" rx="1" fill="#fff" stroke="#5a6068"/></svg></button>
                    <button aria-label="最大化"><svg width="18" height="16"><path d="M1 1h16v14H1zM6 5v6h6V5z" fill="#fff" fill-rule="evenodd" stroke="#5a6068"/></svg></button>
                    <button class="x" aria-label="閉じる"><svg width="18" height="16"><path d="M1 2l2-1h3l3 4 3-4h3l2 1-4 6 4 6-2 1h-3l-3-4-3 4H3l-2-1 4-6z" fill="#fff" stroke="#5a6068"/></svg></button>
                </div>
            </header>
            <div class="body">
                <slot name="toolbar"></slot>
                <div class="options"><slot name="options"></slot></div>
                <div class="page"><h3>${this.getAttribute('banner') || title}</h3><slot></slot></div>
            </div>`;
    }
}
customElements.define('mdi-window', MdiWindow);

const tool = (icon, label, off, slot) => `<tool-button icon="${icon}" label="${label}"${off ? ' disabled' : ''}${slot ? ` slot="${slot}"` : ''}></tool-button>`;
const history = off => `
    <tool-button slot="history" icon="back" label="戻る" menu${off ? ' disabled' : ''}></tool-button>
    <tool-button slot="history" icon="forward" label="進む" menu disabled></tool-button>`;
const side = printOff => (printOff === null ? '' : tool('print', '印刷', printOff, 'side')) + tool('help', 'ヘルプ', false, 'side') + tool('door', '閉じる', false, 'side');

class AccountingApp extends HTMLElement {
    constructor() {
        super();
        const menus = ['ファイル(F)', '編集(E)', '設定(S)', '帳簿・伝票(C)', '集計(R)', '決算・申告(K)', '拡張機能(X)', 'ツール(T)', 'ウィンドウ(W)', 'オプション(L)', 'ヘルプ(H)'];
        this.attachShadow({mode: 'open'}).innerHTML = `
            <style>
                ${BASE}
                :host { display: flex; flex-direction: column; height: 100vh; padding-bottom: 3px; }
                .title, nav { display: flex; flex: none; align-items: center; font-family: "Noto Sans CJK JP", sans-serif; font-size: 14px; }
                .title { height: 29px; background: linear-gradient(90deg, #41698c 60px, #dcdcdc 60px) 805px 0 / 301px 1px no-repeat #fff; }
                .title h1 { flex: 1; margin: 0 0 2px 6px; font-size: 14px; font-weight: normal; }
                .title button { width: 59px; height: 29px; display: grid; place-content: center; }
                .title button:last-child { width: 62px; padding-right: 3px; }
                .logo { width: 18px; height: 22px; background: #14407c; }
                nav { height: 26px; background: #efefef; padding-left: 4px; border-bottom: 1px solid #a9a9a9; gap: 16px; }
                nav .menu { white-space: nowrap; line-height: 22px; padding-bottom: 3px; }
                .navi { display: flex; align-items: center; gap: 16px; width: 129px; height: 24px; margin-left: auto; padding-left: 2px; border: 1px solid #fff; border-right: 2px solid #77746f; border-bottom: 2px solid #77746f; --icon: 16px; }
                main { display: grid; grid-template-columns: 1fr 1fr; column-gap: 1px; flex: 1; min-height: 0; padding: 1px 2px 0 0; border-top: 1px solid #555; background: #7d8285; }
                .col { display: grid; min-height: 0; min-width: 0; grid-auto-rows: minmax(0, 1fr); }
                .row { display: flex; flex: none; align-items: center; height: 25px; }
                .period { gap: 8px; }
                .period push-button + push-button { margin-left: 12px; }
                .right { margin-left: auto; display: flex; gap: 12px; }
                .main-grid { flex: 1 1 0; }
                .unit { --field: 78px; }
            </style>
            <div class="title">
                <svg class="logo" viewBox="0 0 18 22" aria-hidden="true"><text x="-3" y="10" font-size="10" fill="#fff">弥生</text><text x="7" y="21" font-size="9" fill="#fff">21</text></svg>
                <h1>弥生会計 AE - コラム用テストデータ・第2期(令和04年04月01日-令和05年03月31日) - 管理者</h1>
                <button aria-label="最小化"><svg width="12" height="12" stroke="#000"><path d="M0 5.5h12"/></svg></button>
                <button aria-label="元に戻す"><svg width="13" height="13" stroke="#000" fill="none"><path d="M.5 3.5h9v9h-9zM3.500 3.500v-3h9v9h-3"/></svg></button>
                <button aria-label="閉じる"><svg width="12" height="12" stroke="#000"><path d="M0 0l12 12M12 0L0 12"/></svg></button>
            </div>
            <nav>
                ${menus.map(m => `<button class="menu">${m}</button>`).join('')}
                <button class="navi"><win-icon name="navi"></win-icon>ナビゲータ</button>
            </nav>
            <main>
                <div class="col">
                    <mdi-window active inset-bottom icon="chart" heading="残高試算表（月次・期間）" banner="残高試算表(月次・期間)" style="--banner:#f58a4f">
                        <tool-bar slot="toolbar" cut>
                            ${history()}
                            ${tool('jump', 'ジャンプ', true)}${tool('edit', '前期入力', true)}${tool('excel', 'Excel')}${tool('compose', '構成')}
                            ${side()}
                        </tool-bar>
                        <check-option slot="options" label="補助科目を表示(_1)" checked></check-option>
                        <check-option slot="options" label="要約表示(_2)"></check-option>
                        <check-option slot="options" label="前期比較表示(_3)"></check-option>
                        <check-option slot="options" label="積上表示(_4)" disabled></check-option>
                        <check-option slot="options" label="残高 0 を表示(_5)"></check-option>
                        <div class="row period">
                            <period-bar></period-bar>
                            <push-button label="全期間(_P)"></push-button>
                            <div class="right">
                                <select-field label="税抜/税込切替(_Z):" value="税抜"></select-field>
                                <select-field class="unit" label="単位(_Y):" value="円"></select-field>
                            </div>
                        </div>
                        <tab-strip tabs="貸借対照表,損益計算書" style="margin-top:9px"></tab-strip>
                        <data-grid class="main-grid" model="balance"></data-grid>
                        <data-grid model="balanceSub" style="margin:6px 2px 0 0;flex:none;height:72px"></data-grid>
                    </mdi-window>
                    <mdi-window inset-right icon="calendar" heading="仕訳辞書">
                        <tool-bar slot="toolbar">
                            ${history()}
                            ${tool('create', '新規作成')}${tool('edit', '編集', true)}${tool('trash', '削除', true)}${tool('sort', '並べ替え')}${tool('category', '分類設定')}
                            ${tool('bulk', '仕訳一括登録', true, 'side')}${side()}
                        </tool-bar>
                        <check-option slot="options" label="登録内容を表示(_1)" checked></check-option>
                        <div class="row"><select-field label="取引分類(_Q):" value="すべて" style="--field:158px;--arrow:15px;--tip:3px"></select-field></div>
                        <data-grid class="main-grid" model="dictionary" style="margin:14px 0"></data-grid>
                        <data-grid model="dictionaryDetail" style="flex:none;height:92px;border-bottom:0;border-radius:5px 5px 0 0"></data-grid>
                    </mdi-window>
                </div>
                <div class="col">
                    <mdi-window overflow icon="ledger" heading="仕訳日記帳" style="--banner:#c08866">
                        <tool-bar slot="toolbar">
                            ${history()}
                            ${tool('trash', '削除')}${tool('search', '検索')}${tool('unsearch', '検索解除', true)}${tool('replace', '置換', true)}${tool('zoom', 'ズーム', true)}${tool('smart', 'スマート取引参照', true)}${tool('voucher', '証憑ビューアー', true)}${tool('viewset', '表示設定')}${tool('resize', 'サイズ切替')}${tool('excel', 'Excel', true)}${tool('account', '科目設定')}
                            ${side(true)}
                        </tool-bar>
                        <check-option slot="options" label="絞り込み機能を使う(_1)"></check-option>
                        <check-option slot="options" label="当日入力仕訳のみ表示(_2)"></check-option>
                        <div class="row period">
                            <period-bar></period-bar>
                            <push-button label="全期間(_Y)"></push-button>
                            <push-button label="ジャンプ(_M)"></push-button>
                        </div>
                        <data-grid class="main-grid" open model="journal" style="margin-top:14px"></data-grid>
                    </mdi-window>
                    <mdi-window inset-right icon="calendar" heading="科目設定">
                        <tool-bar slot="toolbar">
                            ${history()}
                            ${tool('acctnew', '勘定作成', true)}${tool('subnew', '補助作成', true)}${tool('edit', '編集')}${tool('trash', '削除', true)}${tool('subsort', '補助並替', true)}${tool('closing', '決算項目')}
                            ${side()}
                        </tool-bar>
                        <check-option slot="options" label="補助科目を表示(_1)" checked></check-option>
                        <tab-strip tabs="貸借科目,損益科目" style="margin-top:1px"></tab-strip>
                        <data-grid class="main-grid" model="accounts"></data-grid>
                        <data-grid model="accountsSub" style="flex:none;height:12px;margin-top:7px;border-bottom:0;border-radius:5px 5px 0 0"></data-grid>
                    </mdi-window>
                    <mdi-window overflow icon="ledger" heading="前年度仕訳日記帳" style="--banner:#c08866">
                        <tool-bar slot="toolbar">
                            ${history(true)}
                            ${tool('search', '検索')}${tool('unsearch', '検索解除', true)}${tool('smart', 'スマート取引参照', true)}${tool('voucher', '証憑ビューアー', true)}${tool('viewset', '表示設定')}${tool('resize', 'サイズ切替')}
                            ${side(null)}
                        </tool-bar>
                        <check-option slot="options" label="絞り込み機能を使う(_1)" checked></check-option>
                        <div class="row period">
                            <period-bar all></period-bar>
                            <push-button label="全期間(_Y)"></push-button>
                            <push-button label="ジャンプ(_M)"></push-button>
                        </div>
                        <data-grid class="main-grid" open tint model="prevJournal" style="margin-top:14px"></data-grid>
                    </mdi-window>
                </div>
            </main>`;
    }
}
customElements.define('accounting-app', AccountingApp);
</script>
</body>
</html>
